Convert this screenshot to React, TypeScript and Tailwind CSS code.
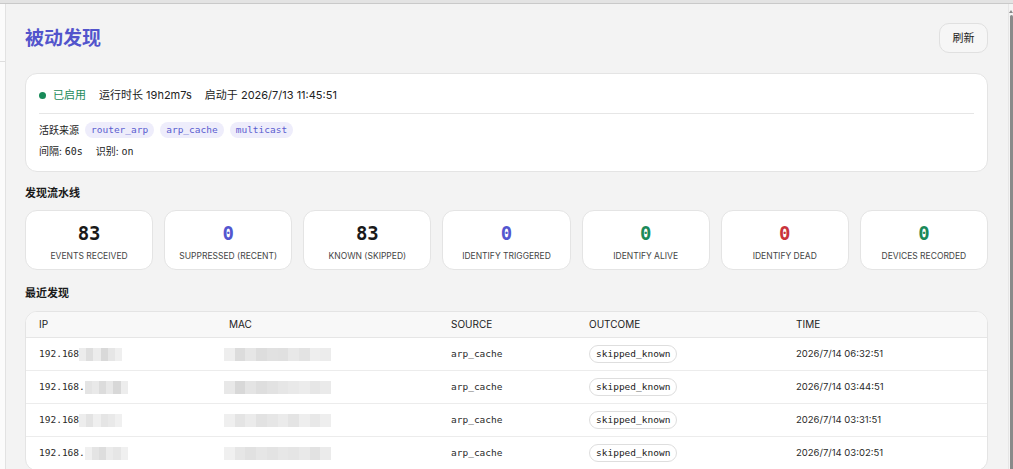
import React from "react";

const SANS = "font-['Inter','Noto_Sans_CJK_SC',sans-serif]";
const MONO = "font-['DejaVu_Sans_Mono','Noto_Sans_CJK_SC',monospace]";

function Redact({ w, cells }: { w: number; cells: string[] }) {
  return (
    <span className="inline-flex h-[13px] align-middle" style={{ width: w }}>
      {cells.map((c, i) => (
        <span key={i} className="flex-1 h-full" style={{ background: c }} />
      ))}
    </span>
  );
}

const stats = [
  { v: "83", l: "EVENTS RECEIVED", c: "text-[#1a1a1a]" },
  { v: "0", l: "SUPPRESSED (RECENT)", c: "text-[#5356cf]" },
  { v: "83", l: "KNOWN (SKIPPED)", c: "text-[#1a1a1a]" },
  { v: "0", l: "IDENTIFY TRIGGERED", c: "text-[#5356cf]" },
  { v: "0", l: "IDENTIFY ALIVE", c: "text-[#1b8a5a]" },
  { v: "0", l: "IDENTIFY DEAD", c: "text-[#c9343c]" },
  { v: "0", l: "DEVICES RECORDED", c: "text-[#1b8a5a]" },
];

const rows = [
  { ip: "192.168", t: "2026/7/14 06:32:51" },
  { ip: "192.168.", t: "2026/7/14 03:44:51" },
  { ip: "192.168", t: "2026/7/14 03:31:51" },
  { ip: "192.168.", t: "2026/7/14 03:02:51" },
];

const ipCells = [
  ["#ececec", "#dedede", "#ececec", "#d9d9d9", "#e6e6e6", "#efefef"],
  ["#e4e4e4", "#e9e9e9", "#dcdcdc", "#e8e8e8", "#d8d8d8", "#ededed"],
  ["#ededed", "#e3e3e3", "#efefef", "#e5e5e5", "#e9e9e9", "#f0f0f0"],
  ["#f0f0f0", "#e4e4e4", "#dddddd", "#ebebeb", "#e6e6e6", "#f0f0f0"],
];
const macCells = [
  ["#eeeeee", "#dcdcdc", "#e6e6e6", "#dddddd", "#e1e1e1", "#e0e0e0", "#e8e8e8", "#e3e3e3", "#eeeeee", "#ececec"],
  ["#e8e8e8", "#d8d8d8", "#e4e4e4", "#dedede", "#e2e2e2", "#e6e6e6", "#e9e9e9", "#ececec", "#e6e6e6", "#eaeaea"],
  ["#efefef", "#e4e4e4", "#ebebeb", "#e2e2e2", "#e6e6e6", "#ebebeb", "#e4e4e4", "#eeeeee", "#e8e8e8", "#eeeeee"],
  ["#f0f0f0", "#e6e6e6", "#e1e1e1", "#e6e6e6", "#e3e3e3", "#e7e7e7", "#e5e5e5", "#e9e9e9", "#e2e2e2", "#ebebeb"],
];

export default function App() {
  return (
    <div className={`w-[1013px] h-[469px] overflow-hidden flex flex-col bg-[#f3f3f3] text-[#1f1f1f] ${SANS}`}>
      <div className="h-[4px] bg-[#e3e3e3] border-b border-[#c9c9c9] shrink-0" />
      <div className="flex flex-1 min-h-0">
        <div className="w-[6px] shrink-0 bg-[#fbfbfb] border-r border-[#e2e2e2] flex flex-col">
          <div className="h-[58px] border-b border-[#dedede]" />
        </div>

        <main className="flex-1 min-w-0 pl-[19px] pr-[20px] pt-[19px]">
          <div className="flex items-center justify-between h-[30px]">
            <h1 className="text-[19px] font-bold text-[#5254cc] leading-none">被动发现</h1>
            <button className="h-[30px] w-[49px] rounded-[10px] border border-[#e0e0e0] bg-[#f6f6f6] text-[11px] text-[#222]">
              刷新
            </button>
          </div>

          <div className="mt-[20px] bg-white border border-[#e4e4e4] rounded-[12px] px-[13px] pt-[13px] pb-[13px]">
            <div className="flex items-center h-[16px] text-[11px] text-[#222]">
              <span className="w-[7px] h-[7px] rounded-full bg-[#178a58] mr-[7px]" />
              <span className="text-[#1b8a5a]">已启用</span>
              <span className="ml-[13px]">运行时长 19h2m7s</span>
              <span className="ml-[13px]">启动于 2026/7/13 11:45:51</span>
            </div>
            <div className="mt-[10px] border-t border-[#e6e6e6]" />
            <div className="mt-[8px] flex items-center h-[16px] text-[10px] text-[#222]">
              <span>活跃来源</span>
              {["router_arp", "arp_cache", "multicast"].map((s) => (
                <span
                  key={s}
                  className={`${MONO} ml-[6px] h-[16px] px-[6px] rounded-full bg-[#eeedfb] text-[#5b5dd0] text-[9.5px] leading-[16px]`}
                >
                  {s}
                </span>
              ))}
            </div>
            <div className="mt-[6px] flex items-center h-[14px] text-[10px] text-[#222]">
              <span>
                间隔: <span className={MONO}>60s</span>
              </span>
              <span className="ml-[13px]">
                识别: <span className={MONO}>on</span>
              </span>
            </div>
          </div>

          <h2 className="mt-[14px] text-[11px] font-bold leading-[14px] text-[#1a1a1a]">发现流水线</h2>
          <div className="mt-[10px] grid grid-cols-7 gap-[11px]">
            {stats.map((s) => (
              <div
                key={s.l}
                className="h-[60px] bg-white border border-[#e4e4e4] rounded-[12px] flex flex-col items-center pt-[11px]"
              >
                <div className={`${MONO} ${s.c} text-[19px] font-semibold leading-[22px]`}>{s.v}</div>
                <div className="mt-[7px] text-[8.5px] text-[#444] leading-[10px]">{s.l}</div>
              </div>
            ))}
          </div>

          <h2 className="mt-[16px] text-[11px] font-bold leading-[14px] text-[#1a1a1a]">最近发现</h2>
          <div className="mt-[11px] bg-white border border-[#e4e4e4] rounded-[12px] overflow-hidden">
            <div className="grid grid-cols-[190px_222px_138px_207px_1fr] px-[13px] h-[26px] items-center bg-[#f8f8f8] border-b border-[#e6e6e6] text-[10px] text-[#222]">
              <span>IP</span>
              <span>MAC</span>
              <span>SOURCE</span>
              <span>OUTCOME</span>
              <span>TIME</span>
            </div>
            {rows.map((r, i) => (
              <div
                key={i}
                className="grid grid-cols-[190px_222px_138px_207px_1fr] px-[13px] h-[33px] items-center border-b border-[#ececec] text-[9.5px] text-[#2a2a2a]"
              >
                <span className="flex items-center">
                  <span className={`${MONO} text-[9.5px]`}>{r.ip}</span>
                  <Redact w={43} cells={ipCells[i]} />
                </span>
                <span className="flex items-center -ml-[5px]">
                  <Redact w={107} cells={macCells[i]} />
                </span>
                <span className={`${MONO} text-[9.5px]`}>arp_cache</span>
                <span>
                  <span className={`${MONO} inline-block h-[18px] leading-[16px] px-[6px] rounded-full border border-[#dedede] text-[9.5px] text-[#222]`}>
                    skipped_known
                  </span>
                </span>
                <span className="text-[9.5px]">{r.t}</span>
              </div>
            ))}
          </div>
        </main>

        <div className="w-[5px] shrink-0 border-l border-[#e6e6e6] bg-[#f4f4f4] flex flex-col items-end">
          <div className="mt-[6px] w-0 h-0 border-l-[2px] border-r-[2px] border-b-[3px] border-l-transparent border-r-transparent border-b-[#888]" />
          <div className="mt-[2px] w-[3px] flex-1 bg-[#8a8a8a] rounded-t-[2px]" />
        </div>
      </div>
    </div>
  );
}
